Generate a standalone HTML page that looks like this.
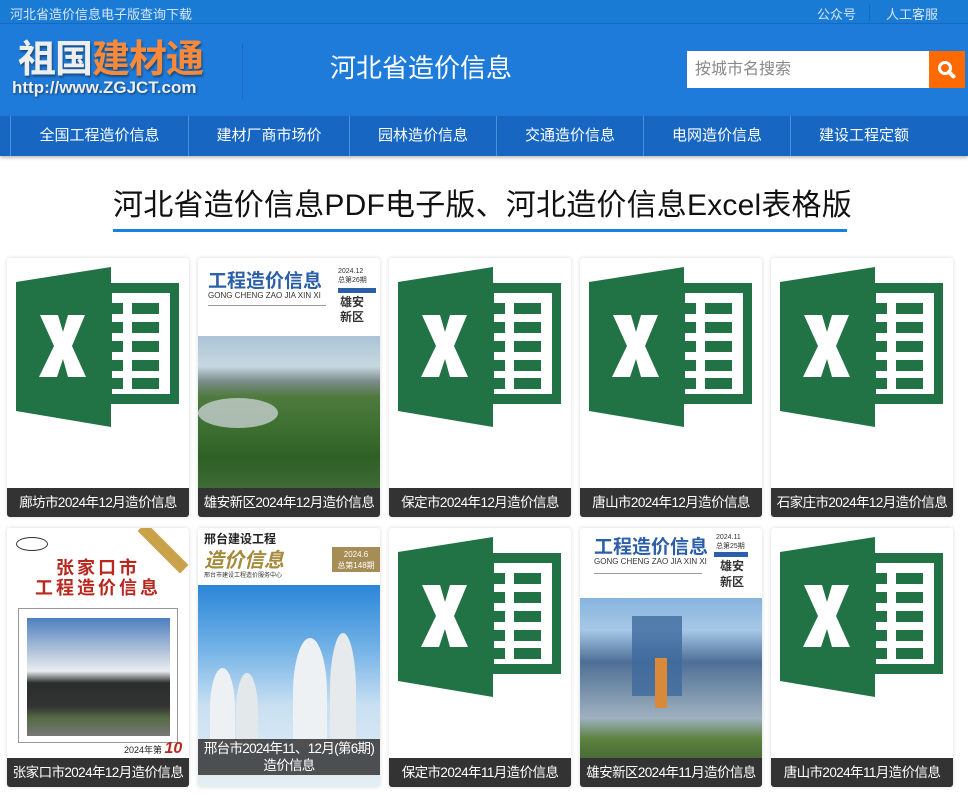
<!DOCTYPE html>
<html><head><meta charset="utf-8"><style>
*{margin:0;padding:0;box-sizing:border-box}
body{width:968px;height:794px;overflow:hidden;background:#fff;font-family:"Liberation Sans","Noto Sans CJK SC",sans-serif;position:relative}
.top{position:absolute;left:0;top:0;width:968px;height:24px;background:#1a7bd4;border-bottom:1px solid #1669c0;color:#d6e6f7;font-size:13px}
.hd{position:absolute;left:0;top:24px;width:968px;height:92px;background:#1f7bd9}
.nav{position:absolute;left:0;top:116px;width:968px;height:40px;background:#1666c2;box-shadow:0 2px 3px rgba(0,0,0,.25)}
.nav div{position:absolute;top:0;height:40px;line-height:40px;color:#fff;font-size:15px;text-align:center;border-left:1px solid #4a92e0}
.card{position:absolute;width:182px;height:259px;background:#fff;border-radius:3px;box-shadow:0 0 4px rgba(0,0,0,.15);overflow:hidden}
.cap{position:absolute;left:0;bottom:0;width:182px;height:29px;background:#333;color:#fff;font-size:13.5px;line-height:29px;text-align:center;white-space:nowrap;letter-spacing:-.6px}
</style></head><body>
<div class="top"><span style="position:absolute;left:10px;top:4px">河北省造价信息电子版查询下载</span><span style="position:absolute;left:817px;top:4px">公众号</span><span style="position:absolute;left:869px;top:4px;width:1px;height:17px;background:#1669c0"></span><span style="position:absolute;left:886px;top:4px">人工客服</span></div>
<div class="hd">
<div style="position:absolute;left:18px;top:16px;font-size:38px;font-weight:bold;letter-spacing:-1px;line-height:40px;text-shadow:1px 2px 2px rgba(0,0,0,.4)"><span style="color:#eee">祖国</span><span style="color:#f7893a">建材通</span></div>
<div style="position:absolute;left:12px;top:54px;font-size:17px;font-weight:bold;color:#eee;text-shadow:1px 1px 2px rgba(0,0,0,.5)">http://www.ZGJCT.com</div>
<div style="position:absolute;left:242px;top:19px;width:1px;height:56px;background:#1a6cc4"></div>
<div style="position:absolute;left:330px;top:24px;font-size:26px;color:#fff">河北省造价信息</div>
<div style="position:absolute;left:687px;top:27px;width:242px;height:37px;background:#fff;color:#888;font-size:16px;line-height:37px;padding-left:8px">按城市名搜索</div>
<div style="position:absolute;left:929px;top:27px;width:36px;height:37px;background:#ff6a00"><svg width="36" height="37"><circle cx="16" cy="17" r="5.5" fill="none" stroke="#fff" stroke-width="3"/><line x1="20" y1="21" x2="24.5" y2="25.5" stroke="#fff" stroke-width="4" stroke-linecap="round"/></svg></div>
</div>
<div class="nav">
<div style="left:10px;width:178px">全国工程造价信息</div>
<div style="left:188px;width:161px">建材厂商市场价</div>
<div style="left:349px;width:147px">园林造价信息</div>
<div style="left:496px;width:147px">交通造价信息</div>
<div style="left:643px;width:147px">电网造价信息</div>
<div style="left:790px;width:147px">建设工程定额</div>
</div>
<div style="position:absolute;left:113px;top:180px;width:734px;text-align:center;font-size:30px;color:#111;letter-spacing:.2px;white-space:nowrap">河北省造价信息PDF电子版、河北造价信息Excel表格版</div>
<div style="position:absolute;left:113px;top:229px;width:734px;height:3px;background:#1a7fe0"></div>

<!-- row 1 -->
<div class="card" style="left:7px;top:258px"><svg width="182" height="230"><polygon points="9,24 104,9 104,169 9,153" fill="#217346"/><rect x="104" y="25" width="68" height="121" fill="#217346"/><rect x="105" y="35" width="58" height="101" fill="#fff"/><g fill="#217346"><rect x="105" y="45" width="11" height="11"/><rect x="125" y="45" width="27" height="11"/><rect x="105" y="64" width="11" height="11"/><rect x="125" y="64" width="27" height="11"/><rect x="105" y="83" width="11" height="11"/><rect x="125" y="83" width="27" height="11"/><rect x="105" y="102" width="11" height="11"/><rect x="125" y="102" width="27" height="11"/><rect x="105" y="120" width="11" height="11"/><rect x="125" y="120" width="27" height="11"/></g><path d="M33 57 L51 57 L56 74 L61 57 L78 57 L65 88 L79 119 L61 119 L56 101 L50 119 L32 119 L47 88 Z" fill="#fff"/></svg><div class="cap">廊坊市2024年12月造价信息</div></div>

<div class="card" style="left:198px;top:258px">
<div style="position:absolute;left:10px;top:8px;font-size:19px;color:#2b5fa8;font-weight:bold">工程造价信息</div>
<div style="position:absolute;left:10px;top:33px;font-size:8px;color:#333">GONG CHENG ZAO JIA XIN XI</div>
<div style="position:absolute;left:10px;top:47px;width:118px;height:1px;background:#999"></div>
<div style="position:absolute;left:140px;top:10px;font-size:7px;color:#333">2024.12<br>总第26期</div>
<div style="position:absolute;left:140px;top:30px;width:38px;height:5px;background:#2b5fa8"></div>
<div style="position:absolute;left:142px;top:37px;font-size:12px;color:#333;line-height:15px;font-weight:bold">雄安<br>新区</div>
<div style="position:absolute;left:0;top:78px;width:182px;height:152px;background:linear-gradient(#a9c4d6 0%,#c8d8e0 20%,#7a8c8a 30%,#4f7a3e 40%,#3d7030 60%,#2e6026 80%,#3f6a34 100%)"></div>
<div style="position:absolute;left:0;top:140px;width:80px;height:30px;border-radius:50%;background:#c5d0cf;opacity:.8"></div>
<div class="cap">雄安新区2024年12月造价信息</div></div>

<div class="card" style="left:389px;top:258px"><svg width="182" height="230"><polygon points="9,24 104,9 104,169 9,153" fill="#217346"/><rect x="104" y="25" width="68" height="121" fill="#217346"/><rect x="105" y="35" width="58" height="101" fill="#fff"/><g fill="#217346"><rect x="105" y="45" width="11" height="11"/><rect x="125" y="45" width="27" height="11"/><rect x="105" y="64" width="11" height="11"/><rect x="125" y="64" width="27" height="11"/><rect x="105" y="83" width="11" height="11"/><rect x="125" y="83" width="27" height="11"/><rect x="105" y="102" width="11" height="11"/><rect x="125" y="102" width="27" height="11"/><rect x="105" y="120" width="11" height="11"/><rect x="125" y="120" width="27" height="11"/></g><path d="M33 57 L51 57 L56 74 L61 57 L78 57 L65 88 L79 119 L61 119 L56 101 L50 119 L32 119 L47 88 Z" fill="#fff"/></svg><div class="cap">保定市2024年12月造价信息</div></div>

<div class="card" style="left:580px;top:258px"><svg width="182" height="230"><polygon points="9,24 104,9 104,169 9,153" fill="#217346"/><rect x="104" y="25" width="68" height="121" fill="#217346"/><rect x="105" y="35" width="58" height="101" fill="#fff"/><g fill="#217346"><rect x="105" y="45" width="11" height="11"/><rect x="125" y="45" width="27" height="11"/><rect x="105" y="64" width="11" height="11"/><rect x="125" y="64" width="27" height="11"/><rect x="105" y="83" width="11" height="11"/><rect x="125" y="83" width="27" height="11"/><rect x="105" y="102" width="11" height="11"/><rect x="125" y="102" width="27" height="11"/><rect x="105" y="120" width="11" height="11"/><rect x="125" y="120" width="27" height="11"/></g><path d="M33 57 L51 57 L56 74 L61 57 L78 57 L65 88 L79 119 L61 119 L56 101 L50 119 L32 119 L47 88 Z" fill="#fff"/></svg><div class="cap">唐山市2024年12月造价信息</div></div>

<div class="card" style="left:771px;top:258px"><svg width="182" height="230"><polygon points="9,24 104,9 104,169 9,153" fill="#217346"/><rect x="104" y="25" width="68" height="121" fill="#217346"/><rect x="105" y="35" width="58" height="101" fill="#fff"/><g fill="#217346"><rect x="105" y="45" width="11" height="11"/><rect x="125" y="45" width="27" height="11"/><rect x="105" y="64" width="11" height="11"/><rect x="125" y="64" width="27" height="11"/><rect x="105" y="83" width="11" height="11"/><rect x="125" y="83" width="27" height="11"/><rect x="105" y="102" width="11" height="11"/><rect x="125" y="102" width="27" height="11"/><rect x="105" y="120" width="11" height="11"/><rect x="125" y="120" width="27" height="11"/></g><path d="M33 57 L51 57 L56 74 L61 57 L78 57 L65 88 L79 119 L61 119 L56 101 L50 119 L32 119 L47 88 Z" fill="#fff"/></svg><div class="cap">石家庄市2024年12月造价信息</div></div>

<!-- row 2 -->
<div class="card" style="left:7px;top:528px">
<div style="position:absolute;left:9px;top:9px;width:32px;height:14px;border:1px solid #333;border-radius:50%"></div>
<div style="position:absolute;left:150px;top:-10px;width:12px;height:60px;background:#c9a24a;transform:rotate(-45deg)"></div>
<div style="position:absolute;left:0;top:30px;width:182px;text-align:center;font-size:18px;color:#b8281f;font-weight:bold;line-height:20px;letter-spacing:3px">张家口市<br>工程造价信息</div>
<div style="position:absolute;left:11px;top:80px;width:160px;height:135px;border:1px solid #999"></div>
<div style="position:absolute;left:20px;top:90px;width:143px;height:118px;background:linear-gradient(#4d7fc0 0%,#b9c8dc 30%,#e8edf2 45%,#2a2e2c 55%,#333 75%,#556b45 85%,#777 100%)"></div>
<div style="position:absolute;left:117px;top:212px;font-size:9px;color:#222">2024年第 <b style="color:#b8281f;font-size:16px;font-style:italic">10</b> 期</div>
<div class="cap">张家口市2024年12月造价信息</div></div>

<div class="card" style="left:198px;top:528px">
<div style="position:absolute;left:6px;top:2px;font-size:12px;font-weight:bold;color:#222">邢台建设工程</div>
<div style="position:absolute;left:6px;top:16px;font-size:20px;font-weight:bold;font-style:italic;color:#a58a3a">造价信息</div>
<div style="position:absolute;left:134px;top:19px;width:48px;height:25px;background:#a58d55;color:#fff;font-size:8px;text-align:center;line-height:11px;padding-top:2px">2024.6<br>总第148期</div>
<div style="position:absolute;left:6px;top:42px;font-size:6px;color:#333">邢台市建设工程造价服务中心</div>
<div style="position:absolute;left:0;top:57px;width:182px;height:202px;background:linear-gradient(#2a86d8 0%,#6fb0e6 30%,#c9e0f2 60%,#e4eef4 100%)"></div>
<div style="position:absolute;left:12px;top:140px;width:25px;height:80px;background:#eef1f3;border-radius:50% 50% 0 0"></div>
<div style="position:absolute;left:38px;top:145px;width:22px;height:75px;background:#e3e8ea;border-radius:50% 50% 0 0"></div>
<div style="position:absolute;left:95px;top:110px;width:34px;height:110px;background:#eef1f3;border-radius:50% 50% 0 0"></div>
<div style="position:absolute;left:132px;top:105px;width:26px;height:115px;background:#e6eaec;border-radius:50% 50% 0 0"></div>
<div style="position:absolute;left:0;bottom:12px;width:182px;height:36px;background:rgba(40,40,40,.8);color:#fff;font-size:13.5px;line-height:17px;text-align:center;padding-top:1px;letter-spacing:-.7px;white-space:nowrap">邢台市2024年11、12月(第6期)<br>造价信息</div></div>

<div class="card" style="left:389px;top:528px"><svg width="182" height="230"><polygon points="9,24 104,9 104,169 9,153" fill="#217346"/><rect x="104" y="25" width="68" height="121" fill="#217346"/><rect x="105" y="35" width="58" height="101" fill="#fff"/><g fill="#217346"><rect x="105" y="45" width="11" height="11"/><rect x="125" y="45" width="27" height="11"/><rect x="105" y="64" width="11" height="11"/><rect x="125" y="64" width="27" height="11"/><rect x="105" y="83" width="11" height="11"/><rect x="125" y="83" width="27" height="11"/><rect x="105" y="102" width="11" height="11"/><rect x="125" y="102" width="27" height="11"/><rect x="105" y="120" width="11" height="11"/><rect x="125" y="120" width="27" height="11"/></g><path d="M33 57 L51 57 L56 74 L61 57 L78 57 L65 88 L79 119 L61 119 L56 101 L50 119 L32 119 L47 88 Z" fill="#fff"/></svg><div class="cap">保定市2024年11月造价信息</div></div>

<div class="card" style="left:580px;top:528px">
<div style="position:absolute;left:14px;top:4px;font-size:19px;color:#2b5fa8;font-weight:bold">工程造价信息</div>
<div style="position:absolute;left:14px;top:29px;font-size:8px;color:#333">GONG CHENG ZAO JIA XIN XI</div>
<div style="position:absolute;left:14px;top:45px;width:108px;height:1px;background:#999"></div>
<div style="position:absolute;left:136px;top:6px;font-size:7px;color:#333">2024.11<br>总第25期</div>
<div style="position:absolute;left:134px;top:24px;width:34px;height:5px;background:#2b5fa8"></div>
<div style="position:absolute;left:140px;top:30px;font-size:12px;color:#333;line-height:16px;font-weight:bold">雄安<br>新区</div>
<div style="position:absolute;left:0;top:70px;width:182px;height:160px;background:linear-gradient(#86b4df 0%,#a6c8e6 20%,#4d6f96 40%,#7d95ad 60%,#9fb1c0 75%,#5d8240 88%,#4a6b36 100%)"></div>
<div style="position:absolute;left:52px;top:88px;width:50px;height:80px;background:#3f6a9e;opacity:.8"></div>
<div style="position:absolute;left:75px;top:130px;width:12px;height:50px;background:#d88a3a"></div>
<div class="cap">雄安新区2024年11月造价信息</div></div>

<div class="card" style="left:771px;top:528px"><svg width="182" height="230"><polygon points="9,24 104,9 104,169 9,153" fill="#217346"/><rect x="104" y="25" width="68" height="121" fill="#217346"/><rect x="105" y="35" width="58" height="101" fill="#fff"/><g fill="#217346"><rect x="105" y="45" width="11" height="11"/><rect x="125" y="45" width="27" height="11"/><rect x="105" y="64" width="11" height="11"/><rect x="125" y="64" width="27" height="11"/><rect x="105" y="83" width="11" height="11"/><rect x="125" y="83" width="27" height="11"/><rect x="105" y="102" width="11" height="11"/><rect x="125" y="102" width="27" height="11"/><rect x="105" y="120" width="11" height="11"/><rect x="125" y="120" width="27" height="11"/></g><path d="M33 57 L51 57 L56 74 L61 57 L78 57 L65 88 L79 119 L61 119 L56 101 L50 119 L32 119 L47 88 Z" fill="#fff"/></svg><div class="cap">唐山市2024年11月造价信息</div></div>
</body></html>
